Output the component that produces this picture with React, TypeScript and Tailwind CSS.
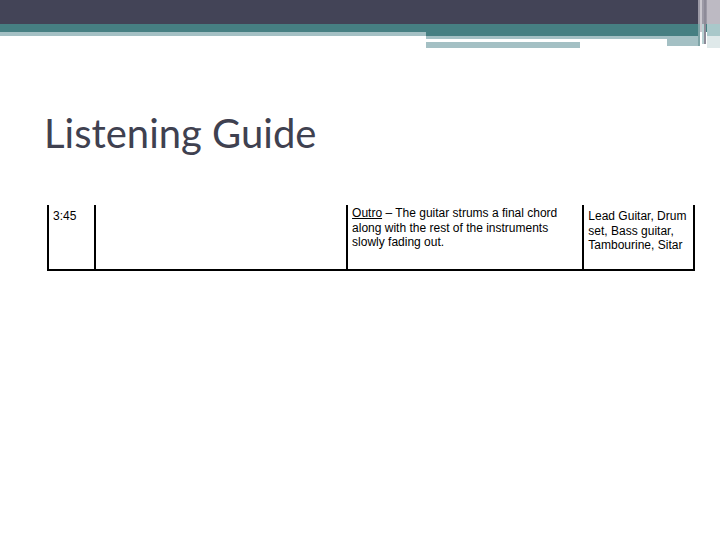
import React from "react";

function HeaderDecor() {
  return (
    <svg width="720" height="56" viewBox="0 0 720 56" className="block">
      <rect x="0" y="0" width="720" height="24" fill="#434457" />
      <rect x="0" y="24" width="720" height="8" fill="#467f82" />
      <rect x="0" y="32" width="426" height="4" fill="#a4c0c4" />
      <rect x="426" y="32" width="274" height="4" fill="#467f82" />
      <rect x="426" y="36" width="241" height="3" fill="#a4c0c4" />
      <rect x="426" y="42" width="154" height="6" fill="#a4c0c4" />
      <rect x="667" y="36" width="33" height="10" fill="#a4c0c4" />
      <rect x="698" y="0" width="22" height="24" fill="#9c9aa6" />
      <rect x="700" y="0" width="2" height="32" fill="#c9c7ce" />
      <rect x="704" y="0" width="2" height="44" fill="#8d8b98" />
      <rect x="707" y="0" width="13" height="24" fill="#bdbac3" />
      <rect x="707" y="24" width="13" height="12" fill="#a9c8ca" />
      <rect x="707" y="36" width="13" height="12" fill="#dfe9ea" />
      <rect x="702" y="24" width="2" height="20" fill="#b8d0d2" />
      <rect x="698" y="24" width="2" height="22" fill="#7fa4a7" />
    </svg>
  );
}

export default function App() {
  return (
    <div className="w-[720px] h-[540px] bg-white overflow-hidden relative">
      <HeaderDecor />
      <div className="pl-[44px] pt-[53px]">
        <h1
          className="text-[40px] leading-[48px] text-[#3f4150]"
          style={{ fontFamily: "Lato, 'Open Sans', sans-serif" }}
        >
          Listening Guide
        </h1>
      </div>
      <div
        className="ml-[47px] mt-[48px] w-[648px] h-[66px] flex border-l-2 border-b-2 border-black text-[12px] leading-[14.5px] text-black"
        style={{ fontFamily: "'Liberation Sans', Arial, sans-serif" }}
      >
        <div className="w-[47px] border-r-2 border-black pl-[4px] pt-[4px]">3:45</div>
        <div className="w-[253px] border-r-2 border-black"></div>
        <div className="w-[237px] border-r-2 border-black pl-[4px] pt-[1px]">
          <span className="underline">Outro</span> – The guitar strums a final chord along with the rest of the instruments slowly fading out.
        </div>
        <div className="w-[111px] border-r-2 border-black pl-[4px] pt-[4px]">
          Lead Guitar, Drum set, Bass guitar, Tambourine, Sitar
        </div>
      </div>
    </div>
  );
}
